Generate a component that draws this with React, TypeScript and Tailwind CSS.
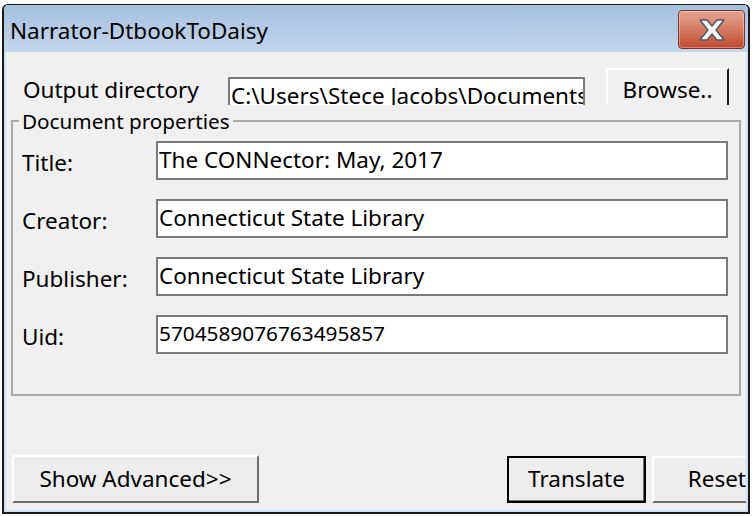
import React from "react";

const font = { fontFamily: '"Noto Sans", "Open Sans", sans-serif' };

function CloseButton() {
  return (
    <div className="absolute right-[3px] top-[5px] w-[67px] h-[39px] rounded-[4px] border border-[#7d3424] bg-gradient-to-b from-[#e4a592] via-[#d47a63] to-[#c0472e] flex items-center justify-center shadow-[inset_0_0_0_1px_rgba(255,255,255,0.35)]">
      <svg width="32" height="24" viewBox="0 0 32 24">
        <path d="M4 2 L11 2 L16 8 L21 2 L28 2 L20 12 L28 22 L21 22 L16 16 L11 22 L4 22 L12 12 Z" fill="#f4f4f4" stroke="#4e5864" strokeWidth="1.3" strokeLinejoin="round" />
      </svg>
    </div>
  );
}

function Field({ label, value, small }: { label: string; value: string; small?: boolean }) {
  return (
    <div className="flex items-center h-[39px]">
      <div className="w-[134px] text-[22.5px] text-black leading-none pt-[6px]">{label}</div>
      <div
        className={
          "flex-1 h-full bg-white border-2 border-[#7a7a7a] px-[1px] text-black whitespace-nowrap " +
          (small ? "text-[20.8px] leading-[26px] pt-[3px]" : "text-[22.5px] leading-[34px]")
        }
      >
        {value}
      </div>
    </div>
  );
}

export default function App() {
  return (
    <div className="w-[754px] h-[516px] bg-white overflow-hidden" style={font}>
      <div className="ml-[2px] mt-[4px] w-[748px] h-[510px] border-2 border-t border-[#1b1b1b] rounded-t-[6px] bg-[#f0f0f0] flex flex-col overflow-hidden">
        {/* title bar */}
        <div className="relative h-[47px] shrink-0 bg-gradient-to-b from-[#a5c0de] to-[#c3d6ec] flex items-center pl-[6px] pt-[6px]">
          <span className="text-[22.5px] text-black leading-none">Narrator-DtbookToDaisy</span>
          <CloseButton />
        </div>
        {/* client */}
        <div className="flex-1 flex flex-col border-l-2 border-b-2 border-r-2 border-[#cfe0f3]">
          <div className="h-[37px] mt-[16px] flex items-start overflow-hidden">
            <div className="w-[222px] pl-[17px] pt-[11px] text-[22.5px] leading-none text-black">Output directory</div>
            <div className="w-[357px] h-[44px] mt-[9px] bg-white border-2 border-[#7a7a7a] pl-[1px] text-[22.5px] leading-[34px] text-black whitespace-nowrap overflow-hidden">
              C:\Users\Stece Jacobs\Documents\CONNector
            </div>
            <div className="ml-[21px] w-[123px] h-[50px] border-t-2 border-l-2 border-white border-r-2 border-r-[#1a1a1a] text-[22.5px] leading-none text-black text-center pt-[9px]">
              Browse..
            </div>
          </div>
          <fieldset className="mx-[5px] mt-[6px] h-[285px] border-2 border-[#a9a9a9] px-[6px] pb-0">
            <legend className="px-[3px] text-[20.7px] leading-none text-black">Document properties</legend>
            <div className="flex flex-col gap-[19px] mt-[9px] pl-[3px] pr-[5px]">
              <Field label="Title:" value="The CONNector: May, 2017" />
              <Field label="Creator:" value="Connecticut State Library" />
              <Field label="Publisher:" value="Connecticut State Library" />
              <Field label="Uid:" value="5704589076763495857" small />
            </div>
          </fieldset>
          <div className="mt-auto mb-[7px] flex items-end pl-[6px]">
            <button className="w-[247px] h-[48px] bg-[#ededed] border-2 border-t-white border-l-white border-r-[#6d6d6d] border-b-[#6d6d6d] text-[22.5px] text-black leading-none">
              Show Advanced&gt;&gt;
            </button>
            <button className="ml-auto w-[139px] h-[47px] bg-[#ededed] border-2 border-black shadow-[inset_-1px_-1px_0_#6d6d6d] text-[22.5px] text-black leading-none">
              Translate
            </button>
            <button className="ml-[6px] w-[94px] h-[47px] bg-[#ededed] border-2 border-t-white border-l-white border-r-0 border-b-[#6d6d6d] text-[22.5px] text-black leading-none text-right">
              Reset
            </button>
          </div>
        </div>
      </div>
    </div>
  );
}
